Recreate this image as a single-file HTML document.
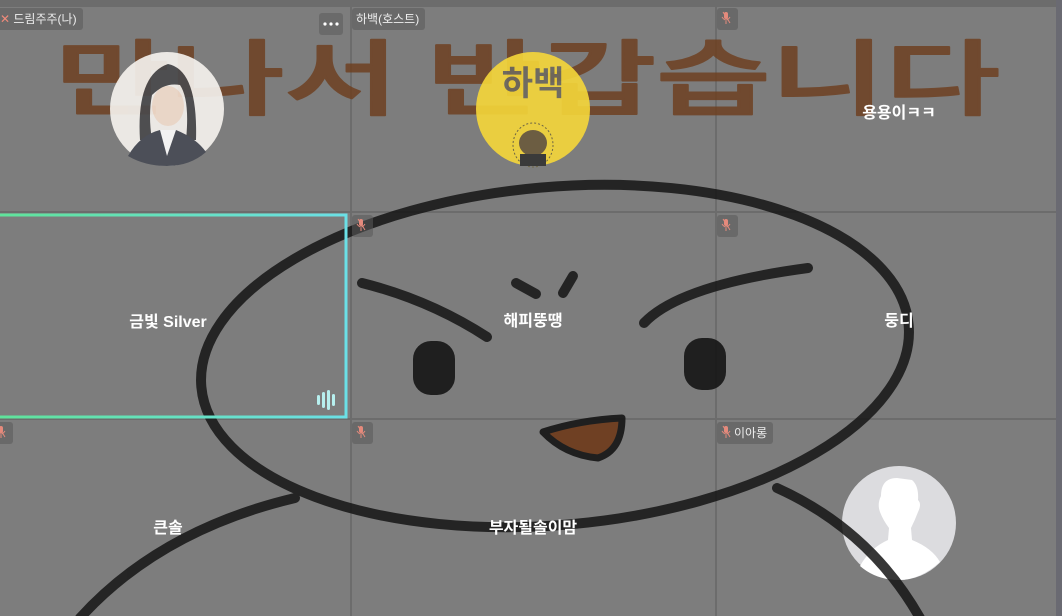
<!DOCTYPE html>
<html><head><meta charset="utf-8"><style>
html,body{margin:0;padding:0;width:1062px;height:616px;overflow:hidden;background:#7c7c7c}
.lbl{position:absolute;color:#fff;font:bold 16px "Liberation Sans","Noto Sans CJK KR",sans-serif;white-space:nowrap;transform:translateX(-50%)}
.tag{position:absolute;background:rgba(90,90,90,.55);border-radius:3px;color:#eee;font:12px "Liberation Sans","Noto Sans CJK KR",sans-serif;height:22px;line-height:22px;padding:0 6px 0 4px;white-space:nowrap}
.mic{display:inline-block;width:10px;height:14px;vertical-align:-2px;margin-right:3px}
</style></head><body>
<svg width="1062" height="616" style="position:absolute;left:0;top:0">
<rect width="1062" height="616" fill="#7d7d7d"/>
<rect width="1062" height="7" fill="#6c6c6c"/>
<rect x="1056" y="0" width="6" height="616" fill="#6a6a72"/>
<g fill="#6c6c6c">
<rect x="350" y="7" width="2" height="609"/>
<rect x="715" y="7" width="2" height="609"/>
<rect x="0" y="211" width="1056" height="2"/>
<rect x="0" y="418" width="1056" height="2"/>
</g>
<!-- big text -->
<text x="55" y="108" textLength="945" lengthAdjust="spacingAndGlyphs" font-family="Noto Sans CJK KR,sans-serif" font-weight="500" font-size="82" fill="#6e3d1c" stroke="#6e3d1c" stroke-width="2" stroke-linejoin="round" opacity=".8">만나서 반갑습니다</text>
<!-- avatars -->
<g opacity=".9">
<circle cx="167" cy="109" r="57" fill="#f7f4f0"/>
<path d="M140 140 Q136 75 168 64 Q198 70 196 140 L186 140 Q190 100 180 85 Q165 82 152 95 Q148 115 152 140Z" fill="#4a4a4c"/>
<path d="M128 156 Q140 135 160 130 L176 130 Q196 138 206 152 Q190 166 167 166 Q145 166 128 156Z" fill="#474b55"/>
<path d="M160 130 L167 156 L176 130Z" fill="#fff"/>
<ellipse cx="168" cy="106" rx="16" ry="20" fill="#f5e0d0"/>
<circle cx="533" cy="109" r="57" fill="#f6d73a"/>
<text x="533" y="95" text-anchor="middle" font-family="Liberation Sans,Noto Sans CJK KR,sans-serif" font-weight="bold" font-size="34" fill="#6e6a5e">하백</text>
<ellipse cx="533" cy="145" rx="20" ry="22" fill="none" stroke="#6d6440" stroke-dasharray="2 2"/>
<ellipse cx="533" cy="143" rx="14" ry="13" fill="#6b5a3c"/>
<rect x="520" y="154" width="26" height="12" fill="#333"/>
</g>
<circle cx="899" cy="523" r="57" fill="#dcdcdf"/>
<path d="M881 496 Q881 478 897 478 L912 480 Q919 486 918 500 Q922 504 918 512 Q915 520 911 528 L912 540 Q932 548 940 562 Q920 580 899 580 Q876 580 860 566 Q870 548 888 540 L889 528 Q883 520 880 512 Q877 504 881 496Z" fill="#fff"/>
<!-- face -->
<g fill="none" stroke="#151515" stroke-width="10" stroke-linecap="round" opacity=".85">
<ellipse cx="555" cy="356" rx="355" ry="169" transform="rotate(-5 555 356)"/>
<path d="M80 618 Q160 530 295 498"/>
<path d="M777 488 Q870 530 920 618"/>
<path d="M362 283 Q430 300 487 337"/>
<path d="M516 283 L536 294"/>
<path d="M563 293 L573 276"/>
<path d="M644 323 Q680 285 808 268"/>
</g>
<g fill="#151515" opacity=".9">
<rect x="413" y="341" width="42" height="54" rx="18"/>
<rect x="684" y="338" width="42" height="52" rx="18"/>
</g>
<path d="M543 432 Q580 420 622 418 Q622 450 598 458 Q565 455 543 432Z" fill="#6e3a1a" stroke="#151515" stroke-width="7" stroke-linejoin="round" opacity=".9"/>
<defs><linearGradient id="g" x1="0" x2="1"><stop offset="0" stop-color="#5fe39a"/><stop offset="1" stop-color="#6be0e6"/></linearGradient></defs>
<rect x="-2" y="215" width="348" height="202" fill="none" stroke="url(#g)" stroke-width="3"/>
<g fill="#b7f0ef"><rect x="317" y="395" width="3" height="10" rx="1.5"/><rect x="322" y="392" width="3" height="16" rx="1.5"/><rect x="327" y="390" width="3" height="20" rx="1.5"/><rect x="332" y="394" width="3" height="12" rx="1.5"/></g>
<rect x="319" y="13" width="24" height="22" rx="3" fill="#6a6a6a"/>
<g fill="#fff"><circle cx="325" cy="24" r="1.6"/><circle cx="331" cy="24" r="1.6"/><circle cx="337" cy="24" r="1.6"/></g>
</svg>

<div class="tag" style="left:-4px;top:8px"><span style="color:#f08a7a">✕</span> 드림주주(나)</div>
<div class="tag" style="left:352px;top:8px">하백(호스트)</div>
<div class="tag" style="left:717px;top:8px;padding:0 4px"><svg class="mic" viewBox="0 0 10 14"><rect x="3" y="1" width="4" height="7" rx="2" fill="#e58a7c"/><path d="M1 6Q5 12 9 6M5 10V13M2 1L9 12" stroke="#e58a7c" fill="none"/></svg></div>
<div class="tag" style="left:352px;top:215px;padding:0 4px"><svg class="mic" viewBox="0 0 10 14"><rect x="3" y="1" width="4" height="7" rx="2" fill="#e58a7c"/><path d="M1 6Q5 12 9 6M5 10V13M2 1L9 12" stroke="#e58a7c" fill="none"/></svg></div>
<div class="tag" style="left:717px;top:215px;padding:0 4px"><svg class="mic" viewBox="0 0 10 14"><rect x="3" y="1" width="4" height="7" rx="2" fill="#e58a7c"/><path d="M1 6Q5 12 9 6M5 10V13M2 1L9 12" stroke="#e58a7c" fill="none"/></svg></div>
<div class="tag" style="left:-8px;top:422px;padding:0 4px"><svg class="mic" viewBox="0 0 10 14"><rect x="3" y="1" width="4" height="7" rx="2" fill="#e58a7c"/><path d="M1 6Q5 12 9 6M5 10V13M2 1L9 12" stroke="#e58a7c" fill="none"/></svg></div>
<div class="tag" style="left:352px;top:422px;padding:0 4px"><svg class="mic" viewBox="0 0 10 14"><rect x="3" y="1" width="4" height="7" rx="2" fill="#e58a7c"/><path d="M1 6Q5 12 9 6M5 10V13M2 1L9 12" stroke="#e58a7c" fill="none"/></svg></div>
<div class="tag" style="left:717px;top:422px"><svg class="mic" viewBox="0 0 10 14"><rect x="3" y="1" width="4" height="7" rx="2" fill="#e58a7c"/><path d="M1 6Q5 12 9 6M5 10V13M2 1L9 12" stroke="#e58a7c" fill="none"/></svg>이아롱</div>

<div class="lbl" style="left:899px;top:99px">용용이ㅋㅋ</div>
<div class="lbl" style="left:168px;top:308px">금빛 Silver</div>
<div class="lbl" style="left:533px;top:307px">해피뚱땡</div>
<div class="lbl" style="left:899px;top:307px">둥디</div>
<div class="lbl" style="left:168px;top:514px">큰솔</div>
<div class="lbl" style="left:533px;top:514px">부자될솔이맘</div>
</body></html>
